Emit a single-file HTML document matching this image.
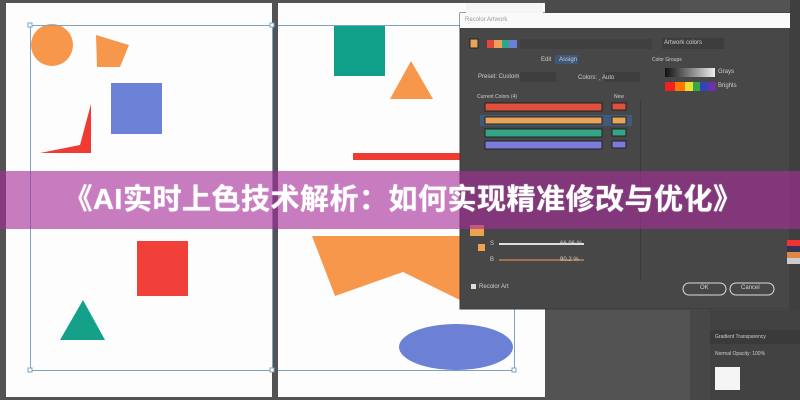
<!DOCTYPE html>
<html><head><meta charset="utf-8"><style>
body{margin:0;width:800px;height:400px;overflow:hidden;background:#535353;position:relative;font-family:"Liberation Sans",sans-serif}
.a{position:absolute}
.banner{position:absolute;left:0;top:171px;width:800px;height:58px;background:rgba(168,45,155,0.62);}
.bt{position:absolute;left:0;top:171px;width:800px;height:58px;line-height:58px;text-align:center;color:#fff;font-weight:bold;font-size:29px;font-family:"Liberation Sans","Noto Sans CJK SC",sans-serif;letter-spacing:0.5px;padding-left:6px;box-sizing:border-box;text-shadow:0 0 1px #fff}
.t{position:absolute;font-size:6px;color:#cfcfcf;white-space:nowrap}
</style></head><body>
<svg class="a" style="left:0;top:0" width="800" height="400">
<rect x="6" y="3" width="266" height="394" fill="#fdfdfd"/>
<rect x="278" y="3" width="267" height="394" fill="#fdfdfd"/>
<circle cx="52" cy="45" r="21" fill="#f7974b"/>
<polygon points="96,35 129,45 120,67 97,67" fill="#f7974b"/>
<rect x="111" y="83" width="51" height="51" fill="#6c82d6"/>
<polygon points="91,104 91,153 40,153 80,145" fill="#ef3b34"/>
<rect x="137" y="241" width="51" height="55" fill="#f13f3a"/>
<polygon points="83,300 60,340 105,340" fill="#15a08a"/>
<rect x="334" y="25" width="51" height="51" fill="#10a08a"/>
<polygon points="411,61 390,99 433,99" fill="#f7974b"/>
<rect x="353" y="153" width="110" height="7" fill="#ee3c33"/>
<polygon points="312,236 470,236 470,305 403,272 335,296" fill="#f7974b"/>
<ellipse cx="456" cy="347" rx="57" ry="23" fill="#6c81d6"/>
<g fill="none" stroke="#7aa3c4" stroke-width="1">
<rect x="30.5" y="25.5" width="242" height="345"/>
<line x1="278" y1="25.5" x2="460" y2="25.5"/>
<line x1="278" y1="370.5" x2="514.5" y2="370.5"/>
<line x1="514.5" y1="308" x2="514.5" y2="370"/>
</g>
<g fill="#fff" stroke="#7aa3c4"><rect x="28" y="23" width="4" height="4"/><rect x="270" y="23" width="4" height="4"/><rect x="28" y="368" width="4" height="4"/><rect x="270" y="368" width="4" height="4"/><rect x="512" y="368" width="4" height="4"/></g>
<rect x="690" y="310" width="20" height="90" fill="#474747"/>
<!-- dialog -->
<rect x="460" y="13" width="330" height="296" fill="#474747" stroke="#3a3a3a"/>
<rect x="460" y="13" width="330" height="15" fill="#fafafa"/>
<rect x="545" y="0" width="135" height="13" fill="#4b4b4b"/>
<rect x="466" y="3" width="77" height="10" fill="#f5f5f5"/>
<rect x="470" y="39" width="8" height="9" fill="#e9a556" stroke="#222"/>
<rect x="487" y="40" width="30" height="8" fill="#6c81d6"/><rect x="487" y="40" width="7" height="8" fill="#e4453a"/><rect x="494" y="40" width="8" height="8" fill="#eda25a"/><rect x="502" y="40" width="7" height="8" fill="#2ea48a"/>
<rect x="520" y="39" width="132" height="10" fill="#404040"/>
<rect x="662" y="38" width="62" height="11" fill="#3d3d3d"/>
<rect x="555" y="55" width="23" height="9" fill="#3e5679"/>
<rect x="520" y="72" width="36" height="10" fill="#3e3e3e"/>
<rect x="605" y="72" width="35" height="10" fill="#3e3e3e"/>
<line x1="640.5" y1="100" x2="640.5" y2="280" stroke="#3a3a3a"/>
<rect x="485" y="103" width="117" height="8" fill="#e1503c" stroke="#222"/>
<rect x="612" y="103" width="14" height="7" fill="#e1503c" stroke="#222"/>
<rect x="480" y="115" width="152" height="11" fill="#415a7a"/>
<rect x="485" y="117" width="117" height="7" fill="#eaa456" stroke="#222"/>
<rect x="612" y="117" width="14" height="7" fill="#eaa456" stroke="#222"/>
<rect x="485" y="129" width="117" height="8" fill="#34a586" stroke="#222"/>
<rect x="612" y="129" width="14" height="7" fill="#34a586" stroke="#222"/>
<rect x="485" y="141" width="117" height="8" fill="#7b7bd9" stroke="#222"/>
<rect x="612" y="141" width="14" height="7" fill="#7b7bd9" stroke="#222"/>
<defs><linearGradient id="g" x1="0" x2="1"><stop offset="0" stop-color="#111"/><stop offset="1" stop-color="#eee"/></linearGradient></defs>
<rect x="665" y="68" width="50" height="9" fill="url(#g)"/>
<rect x="665" y="82" width="10" height="9" fill="#e22"/><rect x="675" y="82" width="10" height="9" fill="#f70"/><rect x="685" y="82" width="8" height="9" fill="#ed3"/><rect x="693" y="82" width="7" height="9" fill="#3a4"/><rect x="700" y="82" width="8" height="9" fill="#34b"/><rect x="708" y="82" width="8" height="9" fill="#63a"/>
<rect x="470" y="225" width="14" height="11" fill="#eda24d"/>
<rect x="478" y="244" width="7" height="7" fill="#eda24d"/>
<rect x="499" y="243" width="85" height="2" fill="#ddd"/>
<rect x="499" y="259" width="85" height="2" fill="#a07050"/>
<rect x="471" y="284" width="5" height="5" fill="#ddd"/>
<rect x="683" y="283" width="43" height="12" rx="6" fill="none" stroke="#ddd"/>
<rect x="730" y="283" width="44" height="12" rx="6" fill="none" stroke="#ddd"/>
<!-- right panel -->
<rect x="790" y="0" width="10" height="400" fill="#3f3f3f"/>
<rect x="710" y="310" width="90" height="90" fill="#424242"/>
<rect x="710" y="330" width="90" height="14" fill="#3a3a3a"/>
<rect x="715" y="367" width="25" height="23" fill="#f5f5f5"/>
<rect x="787" y="240" width="13" height="6" fill="#e33"/><rect x="787" y="246" width="13" height="6" fill="#335"/><rect x="787" y="252" width="13" height="6" fill="#d84"/><rect x="787" y="258" width="13" height="6" fill="#ccc"/>
</svg>
<div class="t" style="left:465px;top:17px;color:#999">Recolor Artwork</div>
<div class="t" style="left:664px;top:40px">Artwork colors</div>
<div class="t" style="left:541px;top:57px">Edit</div><div class="t" style="left:559px;top:57px">Assign</div>
<div class="t" style="left:478px;top:74px">Preset: Custom</div>
<div class="t" style="left:578px;top:74px">Colors: ‸ Auto</div>
<div class="t" style="left:477px;top:94px;font-size:5px">Current Colors (4)</div>
<div class="t" style="left:614px;top:94px;font-size:5px">New</div>
<div class="t" style="left:652px;top:57px;font-size:5px">Color Groups</div>
<div class="t" style="left:718px;top:69px">Grays</div>
<div class="t" style="left:718px;top:83px">Brights</div>
<div class="t" style="left:490px;top:241px">S</div><div class="t" style="left:560px;top:241px">66.96 %</div>
<div class="t" style="left:490px;top:257px">B</div><div class="t" style="left:560px;top:257px">90.2 %</div>
<div class="t" style="left:479px;top:284px">Recolor Art</div>
<div class="t" style="left:700px;top:285px">OK</div>
<div class="t" style="left:741px;top:285px">Cancel</div>
<div class="t" style="left:715px;top:334px;font-size:5px">Gradient  Transparency</div>
<div class="t" style="left:715px;top:351px;font-size:5px">Normal   Opacity: 100%</div>
<div class="banner"></div>
<div class="bt">《AI实时上色技术解析：如何实现精准修改与优化》</div>
</body></html>
